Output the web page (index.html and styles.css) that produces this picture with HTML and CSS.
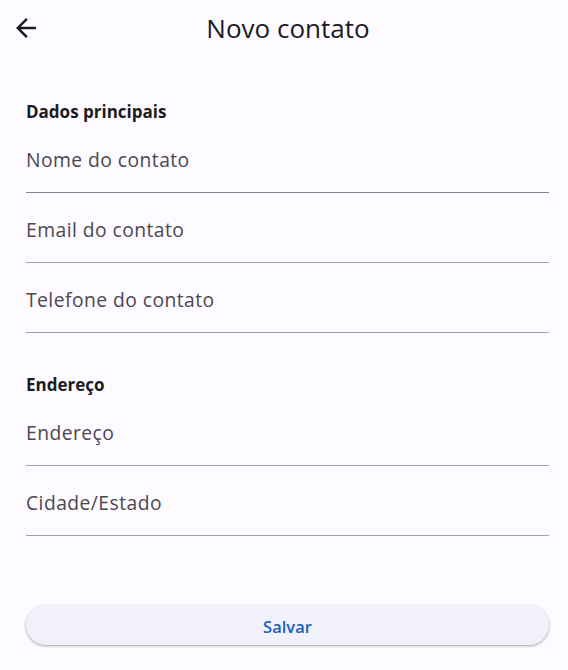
FILE: index.html
```html
<!DOCTYPE html>
<html lang="pt">
<head>
<meta charset="utf-8">
<title>Novo contato</title>
<link rel="stylesheet" href="styles.css">
</head>
<body>
<header class="appbar">
  <button class="back" aria-label="Voltar">
    <svg viewBox="0 0 24 24" width="30" height="30"><path d="M20 11H7.83l5.59-5.59L12 4l-8 8 8 8 1.41-1.41L7.83 13H20v-2z" fill="#1c1b1f"/></svg>
  </button>
  <h1 class="title">Novo contato</h1>
  <span class="spacer"></span>
</header>
<main class="form">
  <section class="group">
    <h2 class="group-title">Dados principais</h2>
    <div class="field field-first"><span class="hint">Nome do contato</span></div>
    <div class="field"><span class="hint">Email do contato</span></div>
    <div class="field"><span class="hint">Telefone do contato</span></div>
  </section>
  <section class="group group-second">
    <h2 class="group-title">Endereço</h2>
    <div class="field"><span class="hint">Endereço</span></div>
    <div class="field"><span class="hint">Cidade/Estado</span></div>
  </section>
  <button class="save">Salvar</button>
</main>
</body>
</html>
```
FILE: styles.css
```css
* { box-sizing: border-box; }
html, body { margin: 0; padding: 0; }
body {
  width: 568px;
  height: 670px;
  background: #fdfbff;
  font-family: "Open Sans", "Noto Sans", sans-serif;
  color: #1c1b1f;
  overflow: hidden;
}
.appbar {
  height: 56px;
  display: grid;
  grid-template-columns: 70px 1fr 62px;
  align-items: center;
}
.back {
  width: 30px;
  height: 30px;
  margin-left: 11px;
  margin-top: -1px;
  padding: 0;
  border: 0;
  background: transparent;
  display: flex;
}
.title {
  margin: 0;
  text-align: center;
  font-size: 26px;
  font-weight: 400;
  line-height: 32px;
  color: #1c1b1f;
}
.form {
  padding: 43px 19px 0 26px;
  display: flex;
  flex-direction: column;
}
.group { display: flex; flex-direction: column; }
.group-second { margin-top: 39px; }
.group-title {
  margin: 0;
  height: 24px;
  padding-top: 1px;
  font-size: 17px;
  line-height: 24px;
  font-weight: 700;
  color: #1c1b1f;
}
.field {
  height: 70px;
  padding-top: 23px;
  border-bottom: 1px solid #a3a1a7;
}
.field-first { border-bottom-color: #86838b; }
.hint {
  display: block;
  font-size: 19.3px;
  line-height: 28px;
  letter-spacing: 0.45px;
  color: #4a4850;
}
.save {
  margin-top: 69px;
  height: 40px;
  border: 0;
  border-radius: 20px;
  background: #f0f1fa;
  box-shadow: 0 1px 2px rgba(0,0,0,0.25), 0 1px 3px 1px rgba(0,0,0,0.08);
  font-family: "Open Sans", "Noto Sans", sans-serif;
  font-size: 16.5px;
  font-weight: 600;
  color: #1a5fba;
  padding: 3px 0 0;
}
```
